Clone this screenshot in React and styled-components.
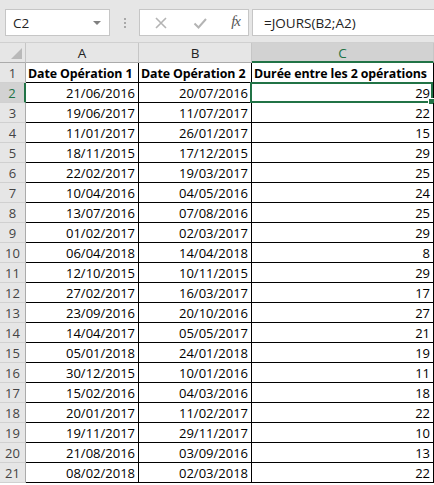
import React from 'react';
import styled, { createGlobalStyle } from 'styled-components';

const GlobalStyle = createGlobalStyle`
  body {
    margin: 0;
    background: #fff;
    font-family: "Open Sans", "Liberation Sans", sans-serif;
  }
`;

const rows = [
  ['21/06/2016', '20/07/2016', 29],
  ['19/06/2017', '11/07/2017', 22],
  ['11/01/2017', '26/01/2017', 15],
  ['18/11/2015', '17/12/2015', 29],
  ['22/02/2017', '19/03/2017', 25],
  ['10/04/2016', '04/05/2016', 24],
  ['13/07/2016', '07/08/2016', 25],
  ['01/02/2017', '02/03/2017', 29],
  ['06/04/2018', '14/04/2018', 8],
  ['12/10/2015', '10/11/2015', 29],
  ['27/02/2017', '16/03/2017', 17],
  ['23/09/2016', '20/10/2016', 27],
  ['14/04/2017', '05/05/2017', 21],
  ['05/01/2018', '24/01/2018', 19],
  ['30/12/2015', '10/01/2016', 11],
  ['15/02/2016', '04/03/2016', 18],
  ['20/01/2017', '11/02/2017', 22],
  ['19/11/2017', '29/11/2017', 10],
  ['21/08/2016', '03/09/2016', 13],
  ['08/02/2018', '02/03/2018', 22],
];

const GREEN = '#217346';

const Wrapper = styled.div`
  width: 434px;
  height: 485px;
  overflow: hidden;
`;

const Toolbar = styled.div`
  display: flex;
  align-items: flex-start;
  height: 43px;
  padding-top: 9px;
  box-sizing: border-box;
  background: #e6e6e6;
  border-bottom: 1px solid #d0d0d0;
`;

const Box = styled.div`
  height: 27px;
  box-sizing: border-box;
  background: #fff;
  border: 1px solid #c6c6c6;
  display: flex;
  align-items: center;
`;

const NameBox = styled(Box)`
  margin-left: 5px;
  width: 105px;
  padding: 0 8px 0 7px;
  justify-content: space-between;
  font-size: 13.5px;
  color: #222;
`;

const Arrow = styled.span`
  width: 0;
  height: 0;
  border-left: 4px solid transparent;
  border-right: 4px solid transparent;
  border-top: 4px solid #808080;
`;

const Grip = styled.div`
  width: 29px;
  height: 27px;
  display: flex;
  flex-direction: column;
  align-items: center;
  justify-content: center;
  gap: 2px;

  span {
    width: 2px;
    height: 2px;
    background: #a8a8a8;
  }
`;

const ButtonBox = styled(Box)`
  width: 110px;
  padding: 0 8px 0 14px;
  justify-content: space-between;
`;

const Fx = styled.span`
  font-family: "Liberation Serif", serif;
  font-style: italic;
  font-size: 15px;
  color: #555;
  letter-spacing: -1px;
  margin-top: -2px;
`;

const FormulaBox = styled(Box)`
  flex: 1;
  margin-left: 3px;
  margin-right: -2px;
  padding-left: 11px;
  font-size: 13.5px;
  color: #222;
`;

const Sheet = styled.div`
  display: grid;
  grid-template-columns: 26px 113px 113px 182px;
  grid-auto-rows: 20px;
  font-size: 13px;
`;

const Corner = styled.div`
  background: #e6e6e6;
  border-right: 1px solid #c6c6c6;
  border-bottom: 1px solid #ababab;
  box-sizing: border-box;
  display: flex;
  align-items: flex-end;
  justify-content: flex-end;
  padding: 0 3px 3px 0;

  span {
    width: 0;
    height: 0;
    border-left: 11px solid transparent;
    border-bottom: 11px solid #b9b9b9;
  }
`;

const ColHead = styled.div`
  box-sizing: border-box;
  background: ${p => (p.$active ? '#d2d2d2' : '#e6e6e6')};
  color: ${p => (p.$active ? GREEN : '#222')};
  border-right: 1px solid #c6c6c6;
  border-bottom: ${p => (p.$active ? `2px solid ${GREEN}` : '1px solid #ababab')};
  display: flex;
  align-items: center;
  justify-content: center;
  font-size: 13.5px;
  padding-top: ${p => (p.$active ? '1px' : '0')};
`;

const RowHead = styled.div`
  box-sizing: border-box;
  background: ${p => (p.$active ? '#d2d2d2' : '#e6e6e6')};
  color: ${p => (p.$active ? GREEN : '#444')};
  border-right: ${p => (p.$active ? `2px solid ${GREEN}` : '1px solid #ababab')};
  border-bottom: 1px solid #d0d0d0;
  display: flex;
  align-items: center;
  justify-content: center;
  font-size: 13px;
`;

const Cell = styled.div`
  position: relative;
  min-width: 0;
  box-sizing: border-box;
  border-right: 1px solid #000;
  border-bottom: 1px solid #000;
  display: flex;
  align-items: center;
  justify-content: ${p => (p.$bold ? 'flex-start' : 'flex-end')};
  padding: 1px 3px 0 2px;
  font-weight: ${p => (p.$bold ? 700 : 400)};
  font-size: ${p => (p.$bold ? '12.4px' : '13px')};
  letter-spacing: ${p => (p.$bold ? '-0.1px' : '0')};
  white-space: nowrap;
  color: #000;
`;

const Selection = styled.div`
  position: absolute;
  left: -2px;
  top: -1px;
  right: 0;
  bottom: -1px;
  border: 2px solid ${GREEN};
  pointer-events: none;

  &::after {
    content: '';
    position: absolute;
    right: -4px;
    bottom: -4px;
    width: 5px;
    height: 5px;
    background: ${GREEN};
    border: 1px solid #fff;
  }
`;

const Icon = ({ children }) => (
  <svg width="14" height="14" viewBox="0 0 14 14" fill="none">
    {children}
  </svg>
);

export default function App() {
  return (
    <Wrapper>
      <GlobalStyle />
      <Toolbar>
        <NameBox>
          C2
          <Arrow />
        </NameBox>
        <Grip>
          <span />
          <span />
          <span />
        </Grip>
        <ButtonBox>
          <Icon>
            <path d="M2 2 L12 12 M12 2 L2 12" stroke="#b4b4b4" strokeWidth="1.6" />
          </Icon>
          <Icon>
            <path d="M1.5 7.5 L5.5 11.5 L13 3" stroke="#b4b4b4" strokeWidth="2" />
          </Icon>
          <Fx>fx</Fx>
        </ButtonBox>
        <FormulaBox>=JOURS(B2;A2)</FormulaBox>
      </Toolbar>
      <Sheet>
        <Corner>
          <span />
        </Corner>
        <ColHead>A</ColHead>
        <ColHead>B</ColHead>
        <ColHead $active>C</ColHead>

        <RowHead>1</RowHead>
        <Cell $bold>Date Opération 1</Cell>
        <Cell $bold>Date Opération 2</Cell>
        <Cell $bold>Durée entre les 2 opérations</Cell>

        {rows.map((r, i) => {
          const n = i + 2;
          return (
            <React.Fragment key={n}>
              <RowHead $active={n === 2}>{n}</RowHead>
              <Cell>{r[0]}</Cell>
              <Cell>{r[1]}</Cell>
              <Cell>
                {r[2]}
                {n === 2 && <Selection />}
              </Cell>
            </React.Fragment>
          );
        })}
      </Sheet>
    </Wrapper>
  );
}
